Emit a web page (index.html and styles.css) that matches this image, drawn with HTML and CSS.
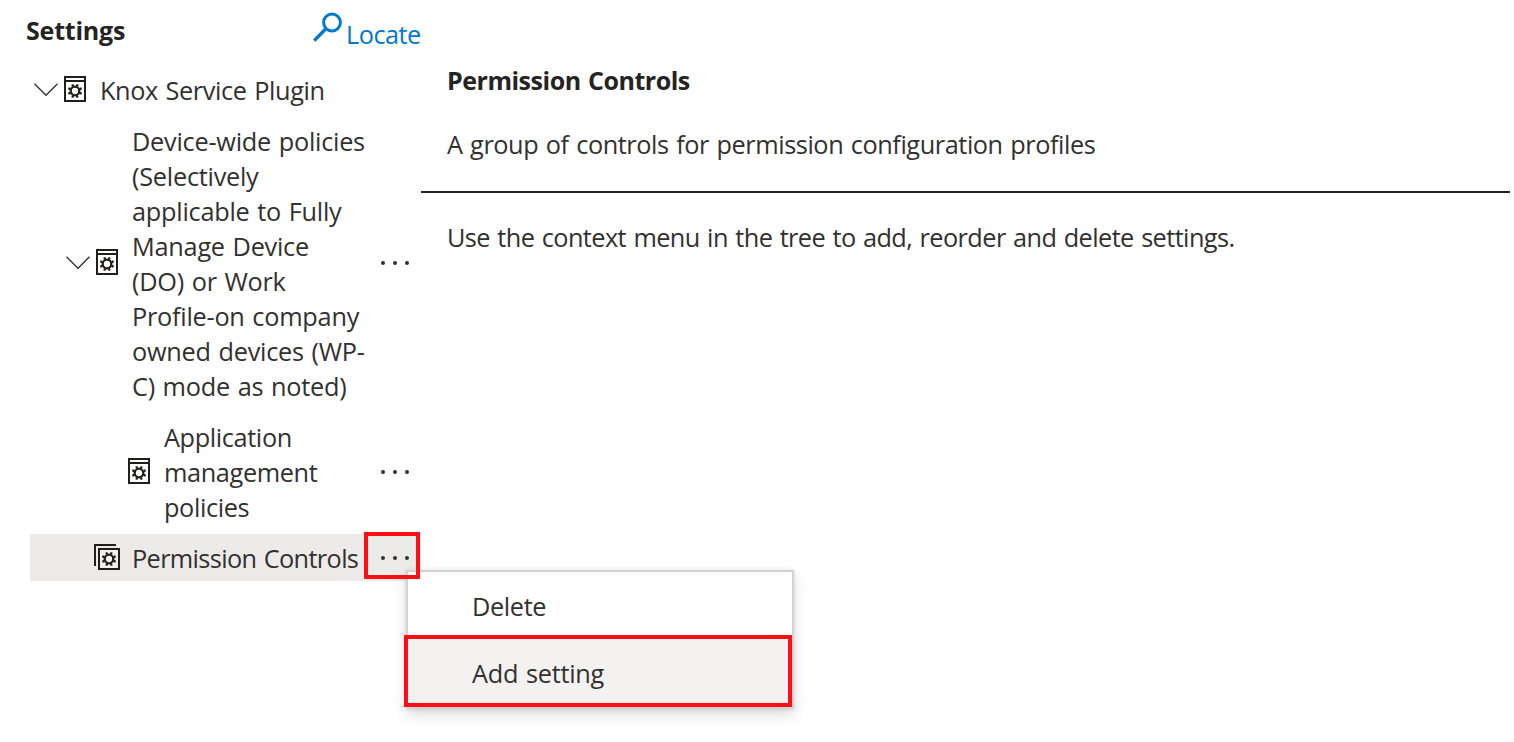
FILE: index.html
```html
<!DOCTYPE html>
<html lang="en">
<head>
<meta charset="utf-8">
<title>Settings</title>
<link rel="stylesheet" href="styles.css">
</head>
<body>
<svg class="defs" aria-hidden="true">
  <symbol id="gear" viewBox="-8 -8 16 16">
    <circle r="4.3" fill="none" stroke="#201f1e" stroke-width="2.3"/>
    <path d="M1.9-4.6 2.7-6.7M4.6-1.9 6.7-2.7M4.6 1.9 6.7 2.7M1.9 4.6 2.7 6.7M-1.9 4.6-2.7 6.7M-4.6 1.9-6.7 2.7M-4.6-1.9-6.7-2.7M-1.9-4.6-2.7-6.7" stroke="#201f1e" stroke-width="2.2"/>
  </symbol>
  <symbol id="group" viewBox="0 0 22 26">
    <path d="M1 1h20v24H1zM1 5h20" fill="#fff" stroke="#201f1e" stroke-width="2"/>
    <use href="#gear" x="3" y="7" width="16" height="16"/>
  </symbol>
  <symbol id="stack" viewBox="0 0 26 26">
    <path d="M22 1H1v21" fill="none" stroke="#201f1e" stroke-width="2"/>
    <path d="M5 5h20v20H5z" fill="#f3f0f0" stroke="#201f1e" stroke-width="2"/>
    <use href="#gear" x="7" y="7" width="16" height="16"/>
  </symbol>
  <symbol id="chevron" viewBox="0 0 24 14">
    <path d="M.5.8 12 12.3 23.5.8" fill="none" stroke="#323130" stroke-width="1.3"/>
  </symbol>
  <symbol id="dots" viewBox="0 0 30 6">
    <g fill="#323130"><circle cx="3" cy="3" r="2"/><circle cx="15" cy="3" r="2"/><circle cx="27" cy="3" r="2"/></g>
  </symbol>
</svg>
<div class="app">
  <aside class="side">
    <header class="head">
      <h1 class="title">Settings</h1>
      <a class="locate"><svg class="search" viewBox="0 0 30 32"><circle cx="19" cy="10.5" r="8.4" fill="none" stroke="#0078d4" stroke-width="3"/><path d="M13 16.5 1.3 28.6" stroke="#0078d4" stroke-width="3.4"/></svg><span class="locate-text">Locate</span></a>
    </header>
    <ul class="tree">
      <li class="row level-1"><svg class="chevron"><use href="#chevron"/></svg><svg class="icon"><use href="#group"/></svg><span class="label knox">Knox Service Plugin</span></li>
      <li class="row level-2"><svg class="chevron"><use href="#chevron"/></svg><svg class="icon"><use href="#group"/></svg><span class="label device">Device-wide policies<br>(Selectively<br>applicable to Fully<br>Manage Device<br>(DO) or Work<br>Profile-on company<br>owned devices (WP-<br>C) mode as noted)</span><button class="more"><svg class="dots"><use href="#dots"/></svg></button></li>
      <li class="row level-3"><svg class="icon"><use href="#group"/></svg><span class="label">Application<br>management<br>policies</span><button class="more"><svg class="dots"><use href="#dots"/></svg></button></li>
      <li class="row level-2b selected"><svg class="icon wide"><use href="#stack"/></svg><span class="label permission">Permission Controls</span><button class="more"><svg class="dots"><use href="#dots"/></svg></button>
        <div class="menu"><div class="item">Delete</div><div class="item active">Add setting</div></div>
        <span class="mark"></span>
      </li>
    </ul>
  </aside>
  <main class="detail">
    <h2 class="detail-title">Permission Controls</h2>
    <p class="desc">A group of controls for permission configuration profiles</p>
    <hr class="rule">
    <p class="hint">Use the context menu in the tree to add, reorder and delete settings.</p>
  </main>
</div>
</body>
</html>
```
FILE: styles.css
```css
*, *::after { box-sizing: border-box; }
body {
  margin: 0;
  background: #fff;
  color: #323130;
  font: 25.3px/35px "Open Sans", "Noto Sans", sans-serif;
  letter-spacing: -0.38px;
  word-spacing: 1.4px;
}
.defs { position: absolute; width: 0; height: 0; }
.app { display: flex; height: 742px; overflow: hidden; }
.side { width: 421px; flex: none; }
.head { display: flex; justify-content: space-between; height: 66px; padding: 12px 0 0 26px; }
.title, .detail-title { margin: 0; color: #252423; font-size: 25px; font-weight: 700; line-height: 35px; letter-spacing: -0.2px; }
.title { padding-top: 1px; }
.detail-title { letter-spacing: -0.48px; }
.locate { display: flex; width: 108px; color: #0078d4; letter-spacing: -0.5px; }
.search { width: 30px; height: 32px; flex: none; }
.locate-text { padding: 5px 0 0 3px; white-space: nowrap; }
.tree { display: flex; flex-direction: column; gap: 4px; margin: 0; padding: 0; list-style: none; }
.row { position: relative; display: flex; align-items: center; margin-left: 30px; padding: 6px 0; }
.level-1 { padding-left: 4px; }
.level-2 { padding-left: 36px; }
.level-3 { padding-left: 98px; }
.level-2b { padding-left: 64px; }
.selected { background: #edebe9; }
.chevron { width: 24px; height: 14px; margin-right: 6px; flex: none; }
.icon { width: 22px; height: 26px; margin: 0 14px 1px 0; flex: none; }
.level-2 .icon { margin-bottom: 2px; }
.wide { width: 26px; margin-right: 12px; }
.label { margin: 1px 0 -1px; white-space: nowrap; }
.device { letter-spacing: -0.25px; }
.permission { letter-spacing: -0.64px; }
.more { display: flex; align-items: center; justify-content: flex-end; width: 40px; margin-left: auto; padding: 0 11px 0 0; border: 0; background: none; }
.dots { width: 30px; height: 6px; flex: none; }
.mark { position: absolute; left: 334px; top: -2px; width: 56px; height: 47px; border: 4px solid #ff0f14; }
.menu {
  position: absolute; left: 376px; top: 36px; width: 388px; height: 139px;
  border: 2px solid #d2d2d2; background: #fff;
  box-shadow: 0 6px 14px rgba(0, 0, 0, .13), 0 1px 4px rgba(0, 0, 0, .11);
}
.item { height: 67px; padding: 17px 64px; }
.active { position: relative; background: #f3f2f1; letter-spacing: -0.25px; }
.active::after { content: ""; position: absolute; left: -4px; top: -4px; width: 388px; height: 72px; border: 4px solid #ff0f14; }
.detail { flex: 1; padding: 63px 4px 0 0; }
.detail-title, .desc, .hint { padding-left: 26px; }
.desc { margin: 29px 0 0; letter-spacing: -0.43px; }
.rule { height: 2px; margin: 29px 0 0; border: 0; background: #252423; }
.hint { margin: 27px 0 0; letter-spacing: -0.58px; }
```
